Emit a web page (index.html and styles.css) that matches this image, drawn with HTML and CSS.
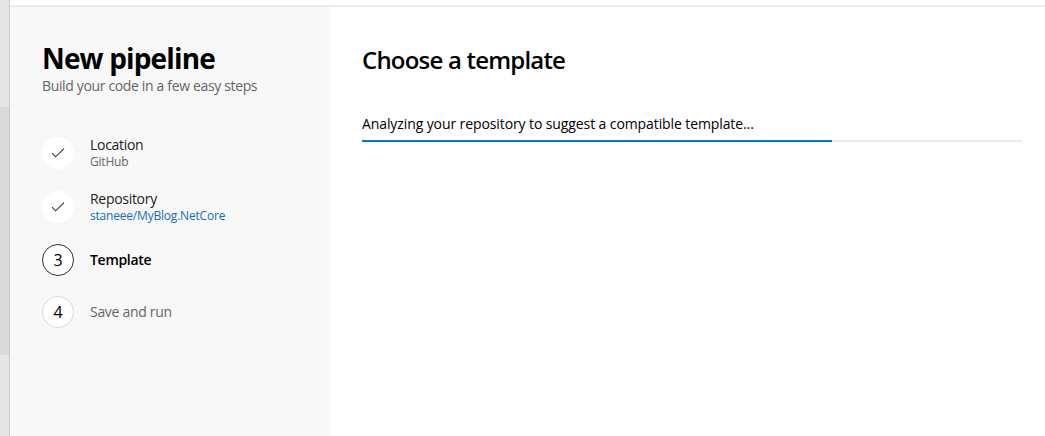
FILE: index.html
```html
<!DOCTYPE html>
<html lang="en">
<head>
<meta charset="utf-8">
<title>New pipeline</title>
<link rel="stylesheet" href="styles.css">
</head>
<body>
<div class="rail">
  <div class="rail-top"></div>
  <div class="rail-thumb"></div>
  <div class="rail-rest"></div>
</div>
<div class="page">
  <div class="topbar"></div>
  <div class="content">
    <aside class="sidebar">
      <h1 class="title">New pipeline</h1>
      <p class="subtitle">Build your code in a few easy steps</p>
      <ol class="steps">
        <li class="step">
          <span class="badge badge-done">
            <svg width="14" height="10" viewBox="0 0 14 10"><path d="M1 5.2 L4.6 8.8 L13 0.6" fill="none" stroke="#333" stroke-width="1.1"/></svg>
          </span>
          <span class="step-text">
            <span class="step-name">Location</span>
            <span class="step-detail">GitHub</span>
          </span>
        </li>
        <li class="step">
          <span class="badge badge-done">
            <svg width="14" height="10" viewBox="0 0 14 10"><path d="M1 5.2 L4.6 8.8 L13 0.6" fill="none" stroke="#333" stroke-width="1.1"/></svg>
          </span>
          <span class="step-text">
            <span class="step-name">Repository</span>
            <span class="step-detail step-link">staneee/MyBlog.NetCore</span>
          </span>
        </li>
        <li class="step">
          <span class="badge badge-current">3</span>
          <span class="step-text">
            <span class="step-name step-active">Template</span>
          </span>
        </li>
        <li class="step">
          <span class="badge badge-todo">4</span>
          <span class="step-text">
            <span class="step-name step-muted">Save and run</span>
          </span>
        </li>
      </ol>
    </aside>
    <main class="main">
      <h2 class="heading">Choose a template</h2>
      <p class="status">Analyzing your repository to suggest a compatible template...</p>
      <div class="progress"><div class="progress-fill" style="width:71.2%"></div></div>
    </main>
  </div>
</div>
</body>
</html>
```
FILE: styles.css
```css
* { box-sizing: border-box; }
html, body { height: 100%; }
body {
  margin: 0;
  display: flex;
  font-family: "Open Sans", "Noto Sans", sans-serif;
  color: #000;
  background: #fff;
  overflow: hidden;
}
.rail {
  width: 10px;
  flex: none;
  display: flex;
  flex-direction: column;
  border-right: 1px solid #c8c8c8;
  background: #e6e6e6;
}
.rail-top { height: 107px; }
.rail-thumb { height: 248px; background: #dadada; }
.rail-rest { flex: 1; }
.page {
  flex: 1;
  display: flex;
  flex-direction: column;
}
.topbar {
  height: 7px;
  background: #fff;
  border-bottom: 2px solid #ececec;
  flex: none;
}
.content {
  flex: 1;
  display: flex;
}
.sidebar {
  width: 320px;
  flex: none;
  background: #f8f8f8;
  padding: 33px 32px 0 32px;
}
.title {
  margin: 0;
  font-size: 28px;
  line-height: 36px;
  font-weight: 700;
  letter-spacing: -0.85px;
}
.subtitle {
  margin: 0;
  font-size: 14px;
  line-height: 20px;
  color: #666;
  letter-spacing: -0.35px;
}
.steps {
  list-style: none;
  margin: 40px 0 0 0;
  padding: 0;
  display: flex;
  flex-direction: column;
  gap: 20px;
}
.step {
  display: flex;
  align-items: center;
  gap: 16px;
  min-height: 32px;
}
.badge {
  width: 32px;
  height: 32px;
  border-radius: 50%;
  background: #fff;
  display: flex;
  align-items: center;
  justify-content: center;
  flex: none;
  font-size: 16px;
  color: #000;
}
.badge-current { border: 1px solid #333; }
.badge-todo { border: 1px solid #dcdcdc; }
.step-text {
  display: flex;
  flex-direction: column;
}
.step-name {
  font-size: 14px;
  line-height: 18px;
  color: #222;
  letter-spacing: -0.3px;
}
.step-active { font-weight: 600; color: #000; }
.step-muted { color: #666; }
.step-detail {
  font-size: 12px;
  line-height: 16px;
  color: #666;
  letter-spacing: -0.2px;
}
.step-link { color: #106ebe; }
.main {
  flex: 1;
  padding: 37px 23px 0 32px;
}
.heading {
  margin: 0;
  font-size: 24px;
  line-height: 32px;
  font-weight: 600;
  letter-spacing: -0.8px;
}
.status {
  margin: 38px 0 0 0;
  font-size: 14px;
  line-height: 20px;
  color: #000;
  letter-spacing: -0.1px;
}
.progress {
  margin-top: 6px;
  height: 2px;
  background: #eaeaea;
}
.progress-fill {
  height: 2px;
  background: #0078d4;
}
```
